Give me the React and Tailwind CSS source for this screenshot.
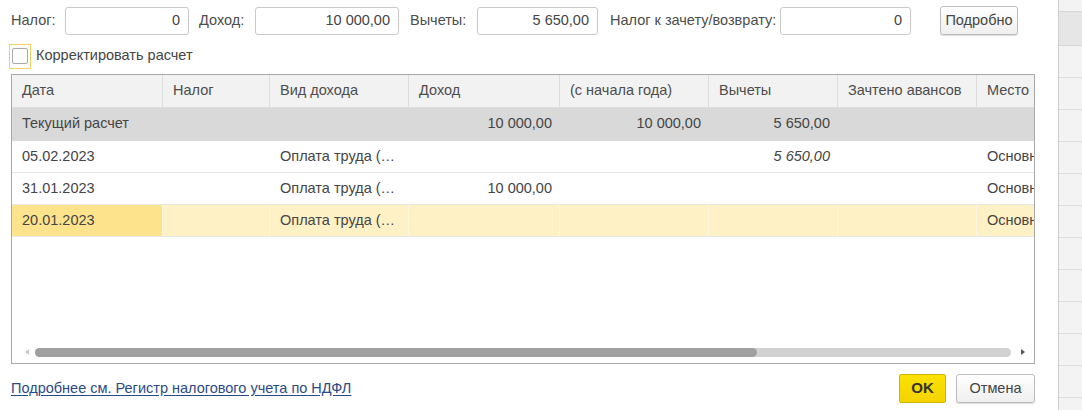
import React from "react";

const cols = [
  { title: "Дата", w: 151, align: "left" },
  { title: "Налог", w: 107, align: "left" },
  { title: "Вид дохода", w: 139, align: "left" },
  { title: "Доход", w: 151, align: "right" },
  { title: "(с начала года)", w: 149, align: "right" },
  { title: "Вычеты", w: 129, align: "right" },
  { title: "Зачтено авансов", w: 139, align: "right" },
  { title: "Место получения дохода", w: 160, align: "left" },
];

const rows = [
  { kind: "total", cells: ["Текущий расчет", "", "", "10 000,00", "10 000,00", "5 650,00", "", ""] },
  { kind: "normal", cells: ["05.02.2023", "", "Оплата труда (…", "", "", "5 650,00", "", "Основное место"], italic: 5 },
  { kind: "normal", cells: ["31.01.2023", "", "Оплата труда (…", "10 000,00", "", "", "", "Основное место"] },
  { kind: "selected", cells: ["20.01.2023", "", "Оплата труда (…", "", "", "", "", "Основное место"] },
];

function Field({ w, value }) {
  return (
    <div
      className="h-[28px] border border-[#c9c9c9] rounded-[3px] bg-white flex items-center justify-end pr-[8px] text-[#454545]"
      style={{ width: w }}
    >
      {value}
    </div>
  );
}

export default function App() {
  return (
    <div className="w-[1082px] h-[410px] flex bg-white overflow-hidden font-['Liberation_Sans',Arial,sans-serif] text-[14.5px] text-[#4d4d4d]">
      <div className="w-[1058px] flex flex-col pl-[11px] pr-[23px]">
        {/* top row */}
        <div className="flex items-center mt-[7px] h-[28px]">
          <span className="w-[54px]">Налог:</span>
          <Field w={124} value="0" />
          <span className="ml-[10px] w-[56px]">Доход:</span>
          <Field w={144} value="10 000,00" />
          <span className="ml-[11px] w-[67px]">Вычеты:</span>
          <Field w={121} value="5 650,00" />
          <span className="ml-[12px] w-[170px] whitespace-nowrap">Налог к зачету/возврату:</span>
          <Field w={131} value="0" />
          <button className="ml-[29px] w-[78px] h-[29px] -mt-[1px] border border-[#bdbdbd] rounded-[3px] bg-gradient-to-b from-white to-[#efefef] shadow-[0_1px_1px_rgba(0,0,0,0.15)] text-[#454545]">
            Подробно
          </button>
        </div>

        {/* checkbox */}
        <div className="flex items-center mt-[8px] h-[26px] -ml-[2px]">
          <div className="w-[22px] h-[25px] border border-[#f0d264] flex items-center justify-center">
            <div className="w-[16px] h-[16px] border border-[#a9a9a9] rounded-[2px] bg-white" />
          </div>
          <span className="ml-[5px] text-[#454545]">Корректировать расчет</span>
        </div>

        {/* table */}
        <div className="mt-[5px] w-[1024px] h-[290px] border border-[#a9a9a9] flex flex-col overflow-hidden">
          <div className="flex-1 overflow-hidden">
            <div className="flex h-[33px] bg-[#f2f2f2] border-b border-[#dcdcdc] w-max">
              {cols.map((c, i) => (
                <div
                  key={i}
                  className="shrink-0 flex items-center pl-[10px] border-r border-[#dddddd] whitespace-nowrap overflow-hidden text-[#4d4d4d]"
                  style={{ width: c.w }}
                >
                  {c.title}
                </div>
              ))}
            </div>
            {rows.map((r, ri) => (
              <div
                key={ri}
                className={
                  "flex h-[32px] w-max border-b " +
                  (r.kind === "total"
                    ? "bg-[#d9d9d9] border-[#d9d9d9] h-[33px]"
                    : r.kind === "selected"
                    ? "bg-[#fef1c5] border-[#e8e8e8]"
                    : "bg-white border-[#e6e6e6]")
                }
              >
                {r.cells.map((v, ci) => {
                  const c = cols[ci];
                  const selCell = r.kind === "selected" && ci === 0;
                  const sep = r.kind === "selected" ? "border-r border-[#fdf6de]" : "";
                  return (
                    <div
                      key={ci}
                      className={
                        "shrink-0 flex items-center whitespace-nowrap overflow-hidden text-[#454545] " +
                        (c.align === "right" ? "justify-end pr-[8px] " : "pl-[10px] ") +
                        (selCell ? "bg-[#fde48c] " : "") +
                        sep +
                        (r.italic === ci ? " italic" : "")
                      }
                      style={{ width: c.w }}
                    >
                      {v}
                    </div>
                  );
                })}
              </div>
            ))}
          </div>
          {/* scrollbar */}
          <div className="h-[20px] flex items-center shrink-0 mb-[1px]">
            <div className="w-[23px] flex justify-center pl-[6px]">
              <div className="w-0 h-0 border-y-[3px] border-y-transparent border-r-[4px] border-r-[#c8c8c8]" />
            </div>
            <div className="w-[976px] h-[9px] rounded-full bg-[#d2d2d2] flex">
              <div className="w-[722px] h-[9px] rounded-full bg-[#a0a0a0]" />
            </div>
            <div className="flex-1 flex justify-center">
              <div className="w-0 h-0 border-y-[3px] border-y-transparent border-l-[4px] border-l-[#555]" />
            </div>
          </div>
        </div>

        {/* bottom */}
        <div className="flex items-center mt-[10px] h-[29px]">
          <a className="text-[#2c4a87] underline underline-offset-2 decoration-[#2c4a87]">
            Подробнее см. Регистр налогового учета по НДФЛ
          </a>
          <div className="ml-auto flex gap-[10px]">
            <button className="w-[47px] h-[29px] border border-[#cfb400] rounded-[2px] bg-gradient-to-b from-[#fce100] to-[#f4d400] font-bold text-[#333] text-[15px]">
              OK
            </button>
            <button className="w-[79px] h-[29px] border border-[#bdbdbd] rounded-[3px] bg-gradient-to-b from-white to-[#efefef] shadow-[0_1px_1px_rgba(0,0,0,0.15)] text-[#454545]">
              Отмена
            </button>
          </div>
        </div>
      </div>

      {/* right strip */}
      <div className="flex-1 border-l border-[#cfcfcf] bg-[#f3f3f3] flex flex-col">
        <div className="h-[12px] border-b border-[#d6d6d6]" />
        <div className="h-[34px] bg-[#e6e6e6] border-b border-[#d6d6d6]" />
        {Array.from({ length: 11 }).map((_, i) => (
          <div key={i} className="h-[32px] shrink-0 border-b border-[#dedede]" />
        ))}
      </div>
    </div>
  );
}
